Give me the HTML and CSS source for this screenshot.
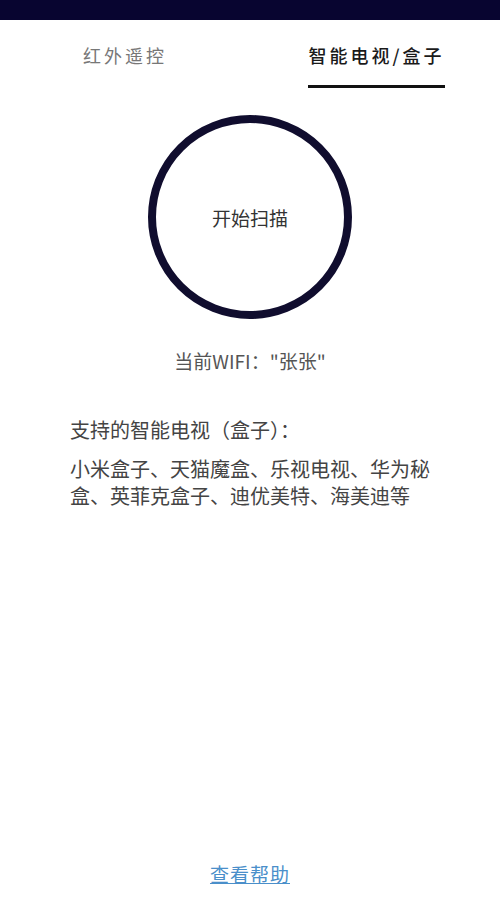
FILE: index.html
```html
<!DOCTYPE html>
<html>
<head>
    <link rel="stylesheet" href="styles.css">
</head>
<body>
    <div class="page">
        <div class="status-bar"></div>

        <div class="tabs">
            <div class="tab"><span class="tab-label">红外遥控</span></div>
            <div class="tab active"><span class="tab-label">智能电视/盒子</span></div>
        </div>

        <div class="scan">
            <div class="scan-circle">开始扫描</div>
        </div>

        <p class="wifi">当前WIFI："张张"</p>

        <div class="support">
            <p class="support-title">支持的智能电视（盒子）：</p>
            <p class="support-list">小米盒子、天猫魔盒、乐视电视、华为秘盒、英菲克盒子、迪优美特、海美迪等</p>
        </div>

        <a class="help" href="#">查看帮助</a>
    </div>
</body>
</html>
```

FILE: styles.css
```css
* {
    box-sizing: border-box;
}

body {
    font-family: "Noto Sans CJK SC", "Noto Sans", sans-serif;
    margin: 0;
    padding: 0;
    background-color: #fff;
}

p {
    margin: 0;
}

.page {
    display: flex;
    flex-direction: column;
    min-height: 900px;
}

.status-bar {
    height: 20px;
    background-color: #080530;
}

.tabs {
    display: flex;
    padding-top: 23px;
}

.tab {
    flex: 1;
    text-align: center;
}

.tab-label {
    display: inline-block;
    font-size: 18px;
    line-height: 24px;
    letter-spacing: 3px;
    color: #777;
    padding-bottom: 18px;
    border-bottom: 3px solid transparent;
}

.tab.active .tab-label {
    color: #1a1a1a;
    font-weight: 500;
    border-bottom-color: #111;
    margin-right: -3px;
}

.scan {
    display: flex;
    justify-content: center;
    margin-top: 27px;
}

.scan-circle {
    width: 204px;
    height: 204px;
    border: 8px solid #100d2e;
    border-radius: 50%;
    display: flex;
    justify-content: center;
    align-items: center;
    font-size: 19px;
    color: #333;
}

.wifi {
    margin-top: 30px;
    text-align: center;
    font-size: 19px;
    line-height: 24px;
    color: #555;
}

.support {
    padding: 0 70px;
    margin-top: 43px;
    font-size: 20px;
    line-height: 27px;
    color: #444;
}

.support-list {
    margin-top: 12px;
}

.help {
    margin-top: auto;
    margin-bottom: 13px;
    align-self: center;
    font-size: 19px;
    line-height: 26px;
    letter-spacing: 1px;
    color: #4a8fca;
    text-decoration: underline;
}
```
